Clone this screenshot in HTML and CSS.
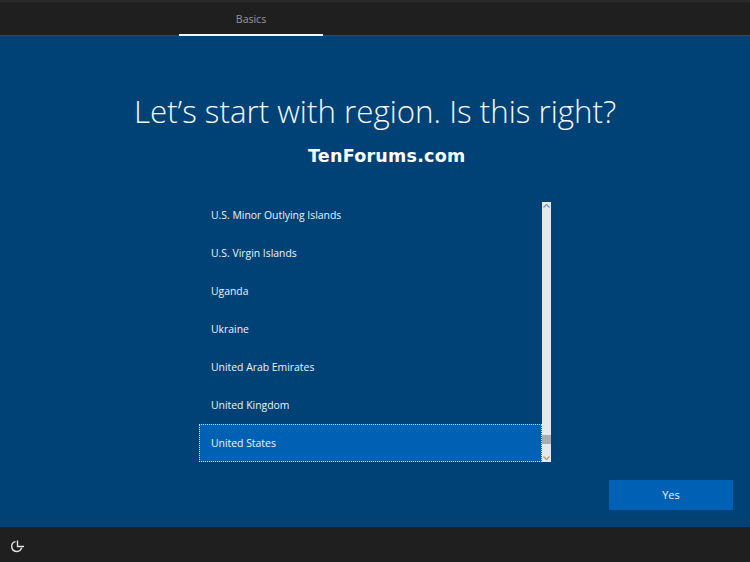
FILE: index.html
```html
<!DOCTYPE html>
<html lang="en">
<head>
<meta charset="utf-8">
<title>Region</title>
<link rel="stylesheet" href="styles.css">
</head>
<body>
<div class="screen">
  <header class="topbar">
    <div class="tab">Basics</div>
  </header>
  <main class="content">
    <h1 class="title">Let’s start with region. Is this right?</h1>
    <div class="brand">TenForums.com</div>
    <div class="picker">
      <ul class="list">
        <li class="item">U.S. Minor Outlying Islands</li>
        <li class="item">U.S. Virgin Islands</li>
        <li class="item">Uganda</li>
        <li class="item">Ukraine</li>
        <li class="item">United Arab Emirates</li>
        <li class="item">United Kingdom</li>
        <li class="item selected">United States</li>
      </ul>
      <div class="scrollbar">
        <svg class="arrow" viewBox="0 0 9 6" width="9" height="6"><path d="M1.5 4.5 L4.5 1.5 L7.5 4.5" fill="none" stroke="#8a8f96" stroke-width="1.2"/></svg>
        <div class="track"><div class="thumb"></div></div>
        <svg class="arrow" viewBox="0 0 9 6" width="9" height="6"><path d="M1.5 1.5 L4.5 4.5 L7.5 1.5" fill="none" stroke="#a89a96" stroke-width="1.2"/></svg>
      </div>
    </div>
    <div class="actions">
      <button class="yes">Yes</button>
    </div>
  </main>
  <footer class="bottombar">
    <svg class="ease" viewBox="0 0 16 16" width="16" height="16">
      <path d="M6.5 3.6 A5 5 0 1 0 12.6 9.6" fill="none" stroke="#e4e4e4" stroke-width="1.4"/>
      <path d="M8.5 2.5 V8.5 H15" fill="none" stroke="#e4e4e4" stroke-width="1.4"/>
    </svg>
  </footer>
</div>
</body>
</html>
```
FILE: styles.css
```css
* { box-sizing: border-box; }
html, body { margin: 0; padding: 0; }
body { width: 750px; height: 562px; overflow: hidden; font-family: "Open Sans", "Liberation Sans", sans-serif; }
.screen { width: 750px; height: 562px; display: flex; flex-direction: column; background: #004275; color: #fff; }
.topbar { height: 36px; flex: none; background: #1f1f1f; border-top: 2px solid #2b2b2b; border-bottom: 1px solid #3d4750; padding-left: 179px; }
.tab { width: 144px; height: 34px; padding-top: 10px; margin-bottom: -1px; text-align: center; font-size: 10.5px; line-height: 15px; color: #9a9a9a; border-bottom: 2px solid #f2f6f8; }
.content { flex: 1; display: flex; flex-direction: column; align-items: center; min-height: 0; }
.title { margin: 54px 0 0; height: 44px; font-family: "Open Sans", sans-serif; font-weight: 300; font-size: 31.3px; line-height: 42px; text-align: center; white-space: nowrap; color: #f4f8fb; }
.brand { align-self: flex-start; margin: 9px 0 0 308px; height: 30px; font-family: "DejaVu Sans", sans-serif; font-weight: 700; font-size: 17.5px; line-height: 26px; letter-spacing: 0.25px; white-space: nowrap; }
.picker { width: 352px; height: 260px; margin-top: 29px; display: flex; align-self: flex-start; margin-left: 199px; }
.list { list-style: none; margin: 0; padding: 0; width: 343px; height: 260px; display: flex; flex-direction: column; justify-content: flex-end; }
.item { height: 38px; flex: none; padding-left: 12px; font-size: 10.4px; line-height: 38px; color: #eef4f8; white-space: nowrap; }
.selected { background: #0061b4; outline: 1px dotted #d5e3ee; outline-offset: -1px; }
.scrollbar { width: 9px; height: 260px; background: #e4e8ec; display: flex; flex-direction: column; align-items: center; }
.arrow { flex: none; margin: 1px 0; }
.track { flex: 1; width: 100%; display: flex; flex-direction: column; justify-content: flex-end; padding-bottom: 10px; }
.thumb { height: 9px; background: #a9acb0; }
.actions { align-self: flex-start; margin: 18px 0 0 609px; }
.yes { display: block; width: 124px; height: 30px; border: 0; padding: 0 0 2px; background: #0061b4; color: #eaf2f8; font-family: "Open Sans", sans-serif; font-size: 11px; }
.bottombar { height: 35px; flex: none; background: #1f1f1f; display: flex; align-items: center; padding: 2px 0 0 9px; }
.ease { display: block; }
```
